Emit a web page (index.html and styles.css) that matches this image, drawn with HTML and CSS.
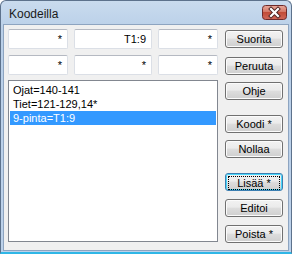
FILE: index.html
```html
<!DOCTYPE html>
<html lang="fi">
<head>
    <meta charset="UTF-8">
    <title>Koodeilla</title>
    <link rel="stylesheet" href="styles.css">
</head>
<body>
    <div class="window">
        <div class="titlebar">
            <span class="title">Koodeilla</span>
            <span class="close-btn">
                <svg width="25" height="15" viewBox="0 0 25 15">
                    <defs>
                        <linearGradient id="closeGrad" x1="0" y1="0" x2="0" y2="1">
                            <stop offset="0" stop-color="#e9a99c"/>
                            <stop offset="0.45" stop-color="#d47867"/>
                            <stop offset="0.5" stop-color="#c24c38"/>
                            <stop offset="1" stop-color="#d0685a"/>
                        </linearGradient>
                    </defs>
                    <rect x="0.5" y="0.5" width="24" height="14" rx="3" fill="url(#closeGrad)" stroke="#6e2a2a"/>
                    <path d="M9 4 L16 11 M16 4 L9 11" stroke="#4a2020" stroke-width="4" stroke-linecap="square"/>
                    <path d="M9 4 L16 11 M16 4 L9 11" stroke="#ffffff" stroke-width="2.2" stroke-linecap="square"/>
                </svg>
            </span>
        </div>
        <div class="client">
            <div class="left-col">
                <div class="fields">
                    <div class="field">*</div>
                    <div class="field">T1:9</div>
                    <div class="field">*</div>
                    <div class="field">*</div>
                    <div class="field">*</div>
                    <div class="field">*</div>
                </div>
                <div class="listbox">
                    <div class="list-item">Ojat=140-141</div>
                    <div class="list-item">Tiet=121-129,14*</div>
                    <div class="list-item selected">9-pinta=T1:9</div>
                </div>
            </div>
            <div class="right-col">
                <button class="btn">Suorita</button>
                <button class="btn gap-9">Peruuta</button>
                <button class="btn gap-7">Ohje</button>
                <button class="btn gap-15">Koodi *</button>
                <button class="btn gap-7">Nollaa</button>
                <button class="btn gap-15 focused"><span class="focus-ring">Lisää *</span></button>
                <button class="btn gap-8">Editoi</button>
                <button class="btn gap-8">Poista *</button>
            </div>
        </div>
    </div>
</body>
</html>
```
FILE: styles.css
```css
body {
    margin: 0;
    background: #ffffff;
    font-family: "Liberation Sans", Arial, sans-serif;
    font-size: 11px;
}

.window {
    width: 292px;
    height: 254px;
    box-sizing: border-box;
    background: linear-gradient(#c9dbee, #b9cfe8 30px, #bcd1ea);
    border: 1px solid #5d728c;
    border-bottom: 2px solid #2fb6e6;
    border-radius: 6px 6px 0 0;
    padding: 0 2px 1px 2px;
    display: flex;
    flex-direction: column;
}

.titlebar {
    height: 23px;
    display: flex;
    align-items: center;
    justify-content: space-between;
    padding: 0 2px 0 6px;
}

.title {
    font-family: "Liberation Sans", Arial, sans-serif;
    font-size: 12px;
    color: #1a1a1a;
    margin-top: 2px;
}

.close-btn {
    display: flex;
    margin-top: -1px;
}

.client {
    flex: 1;
    background: #f0f0f0;
    border: 1px solid #8da4c0;
    display: flex;
    padding: 4px 0 0 4px;
    gap: 7px;
}

.left-col {
    width: 210px;
    display: flex;
    flex-direction: column;
}

.fields {
    display: grid;
    grid-template-columns: 60px 1fr 60px;
    grid-auto-rows: 20px;
    column-gap: 6px;
    row-gap: 6px;
}

.field {
    background: #ffffff;
    border: 1px solid #dbdfe6;
    border-top-color: #b5b9c2;
    border-radius: 2px;
    text-align: right;
    padding-right: 5px;
    line-height: 18px;
    color: #000000;
}

.listbox {
    margin-top: 5px;
    height: 162px;
    box-sizing: border-box;
    border: 1px solid #828790;
    background: #ffffff;
    padding: 2px 1px;
}

.list-item {
    height: 14px;
    line-height: 14px;
    padding-left: 3px;
    color: #000000;
}

.list-item.selected {
    background: #3399ff;
    color: #ffffff;
}

.right-col {
    width: 58px;
    display: flex;
    flex-direction: column;
    padding-top: 1px;
}

.btn {
    height: 18px;
    padding: 0;
    font-family: "Liberation Sans", Arial, sans-serif;
    font-size: 11px;
    color: #000000;
    border: 1px solid #707070;
    border-radius: 3px;
    background: linear-gradient(#f2f2f2, #ebebeb 45%, #dddddd 50%, #cfcfcf);
    box-shadow: inset 0 0 0 1px #fbfbfb;
}

.gap-7 {
    margin-top: 7px;
}

.gap-8 {
    margin-top: 8px;
}

.gap-9 {
    margin-top: 9px;
}

.gap-15 {
    margin-top: 15px;
}

.btn.focused {
    border-color: #3c7fb1;
    box-shadow: inset 0 0 0 1px #48d7fb;
    padding: 2px;
}

.focus-ring {
    display: block;
    height: 12px;
    line-height: 12px;
    border: 1px dotted #000000;
}
```
